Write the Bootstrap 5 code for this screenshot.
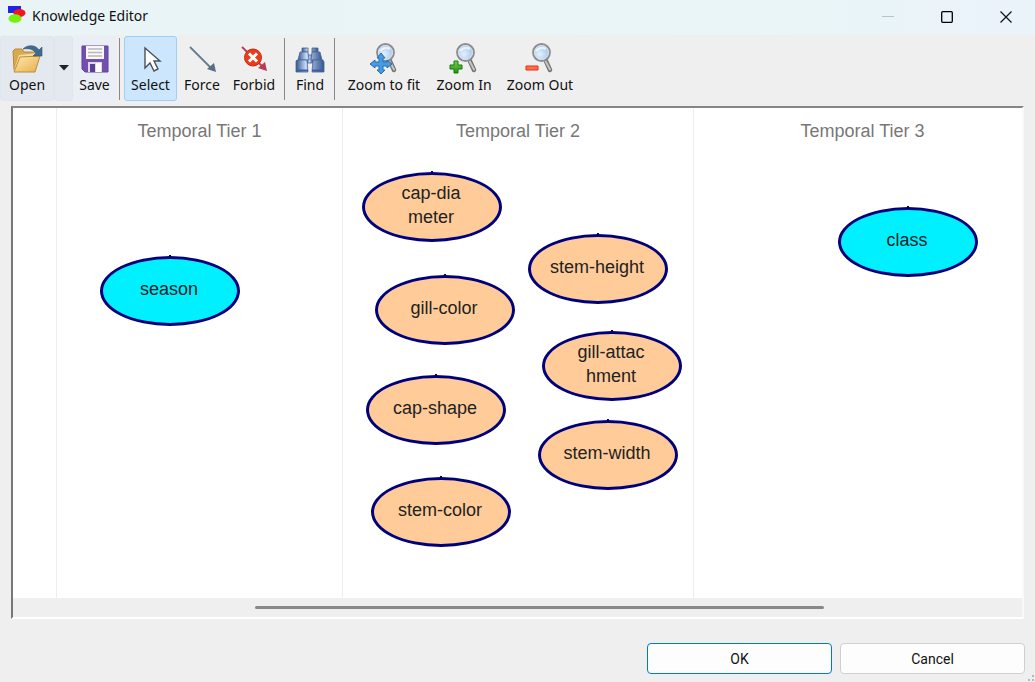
<!DOCTYPE html>
<html lang="en">
<head>
<meta charset="utf-8">
<meta name="viewport" content="width=device-width, initial-scale=1">
<title>Knowledge Editor</title>
<link href="https://cdn.jsdelivr.net/npm/bootstrap@5.3.0/dist/css/bootstrap.min.css" rel="stylesheet">
<style>
body{background:#efefef;color:#111;font:14px/20px "Noto Sans","Open Sans",sans-serif}
.titlebar{height:35px;background:linear-gradient(90deg,#e9f4f6,#e9f5f7 75%,#eaf3fa);padding-left:7px}
.window-title{font-size:14px;line-height:32px;padding-left:2px}
.caption-btn{width:59px;height:32px;border:0;background:none;padding:0}
.toolstrip{height:65px;margin-top:1px}
.tool{border:1px solid transparent;border-radius:3px;background:none;color:#111;padding:5px 0;line-height:20px;white-space:nowrap}
.tool svg{display:block;margin:0 auto 1px}
.tool-tinted{background:#e3e9ef;border-color:#dfe7ed}
.tool-soft{background:#e9eff5}
.tool-active{background:#cce6fd;border-color:#9bd0f8}
.w-open{width:54px}.w-drop{width:19px}.w-save{width:43px}.w-select{width:53px}.w-force{width:50px}.w-forbid{width:54px}.w-find{width:42px}.w-fit{width:90px}.w-in{width:70px}.w-out{width:82px}
.divider{width:1px;background:#888;margin:2px 4px 1px 3px}
.viewport-frame{margin:5px 11px 0;border:2px solid #858585;border-right-color:#f9f9f9;border-bottom-color:#fff;border-left-color:#777}
.board{height:490px;background:#fff;font:18px/24px "Liberation Sans",Arial,sans-serif}
.tier{border-left:1px solid #eee;padding-top:11px;text-align:center;color:#777;flex:none}
.tier h2{font:inherit;margin:0}
.tier-gutter{width:43px}.tier-a{width:286px}.tier-b{width:351px}.tier-c{min-width:338px;flex:1 0 338px}
.node{width:140px;height:70px;border:3px solid #00007d;border-radius:50%;background:#ffcc99;color:#222;text-align:center;padding:0 2px 4px 0}
.node::before{content:"";position:absolute;top:-4px;left:66px;width:2px;height:2px;background:#00007d}
.node-cyan{background:#00f0ff}
.scroll-track{height:19px;padding-top:8px}
.scroll-thumb{width:569px;height:3px;border-radius:2px;background:#898989}
.footer-actions{padding:24px 10px 8px;font-family:Roboto,sans-serif}
.dialog-btn{width:185px;height:31px;border:1px solid #d0d0d0;border-radius:4px;background:#fdfdfd;color:#111;padding:0}
.dialog-btn.default-btn{border-color:#0078d4}
.grip{right:0;bottom:0}
</style>
</head>
<body>
<header class="titlebar d-flex align-items-start">
  <svg class="mt-1" width="19" height="20" viewBox="0 0 19 20"><path fill="#2222e8" d="M1 2h13v7H1z"/><ellipse cx="12.500" cy="9" rx="6" ry="4" fill="#f3161b"/><ellipse cx="8" cy="14.500" rx="6.500" ry="4.300" fill="#75f20c"/></svg>
  <h1 class="window-title m-0 ms-1 fw-normal flex-grow-1">Knowledge Editor</h1>
  <button class="caption-btn" aria-label="Minimize"><svg width="12" height="12"><path d="M0 5.500h12" stroke="#bbc3c6"/></svg></button>
  <button class="caption-btn" aria-label="Maximize"><svg width="12" height="12"><rect x=".7" y=".7" width="10.600" height="10.600" rx="1" fill="none" stroke="#000" stroke-width="1.300"/></svg></button>
  <button class="caption-btn" aria-label="Close"><svg width="12" height="12"><path d="M.5.5l11 11m0-11l-11 11" stroke="#111" stroke-width="1.200"/></svg></button>
</header>

<svg width="0" height="0" class="position-absolute" aria-hidden="true">
  <defs>
    <linearGradient id="folder" x2="1" y2="1"><stop stop-color="#ffe9ae"/><stop offset="1" stop-color="#e8ae4c"/></linearGradient>
    <linearGradient id="tube"><stop stop-color="#34558f"/><stop offset=".35" stop-color="#c9daf5"/><stop offset="1" stop-color="#34558f"/></linearGradient>
    <linearGradient id="plus" x2="0" y2="1"><stop stop-color="#7ed04a"/><stop offset="1" stop-color="#1f9210"/></linearGradient>
    <radialGradient id="lens" cx=".4" cy=".6"><stop stop-color="#e4f1ff"/><stop offset="1" stop-color="#a9cbf0"/></radialGradient>
    <g id="glass"><path d="M21 17l5 11" stroke="#747474" stroke-width="4.500" stroke-linecap="round"/><path d="M21.500 19l4.500 8.500" stroke="#c4c4c4" stroke-width="2" stroke-linecap="round"/><circle cx="17.500" cy="10.500" r="8.400" fill="url(#lens)" stroke="#8c8c8c" stroke-width="2"/><circle cx="17.500" cy="10.500" r="7" fill="none" stroke="#dfe6ec"/><path d="M12 9q4-5 10-2" stroke="#fff" stroke-width="2" fill="none" opacity=".7"/></g>
  </defs>
</svg>

<nav class="toolstrip d-flex" aria-label="Tools">
  <button class="tool tool-tinted w-open"><svg width="32" height="32" viewBox="0 0 32 32"><path d="M2 9l2-2h7l2 3h11v18H3z" fill="#d9a950" stroke="#b98939"/><path d="M8 13L27 11l-3 17H3z" fill="#f6dc9b"/><path d="M9 15l20-1-5 16H3z" fill="url(#folder)" stroke="#bd8d3d"/><path d="M12 7C17 2 25 3 28 8l3-3v9h-9l3-3C22 7 18 6 12 7z" fill="#426a91" stroke="#325676" stroke-width=".6"/></svg>Open</button>
  <button class="tool tool-tinted w-drop" aria-label="Open options"><svg width="10" height="6"><path d="M0 0h10L5 5.500z" fill="#222"/></svg></button>
  <button class="tool tool-soft w-save"><svg width="28" height="32" viewBox="0 0 28 32"><path d="M1 4h26v26H4l-3-3z" fill="#7450ae" stroke="#60419b"/><path d="M5 4h18v13H5z" fill="#f8f8f8"/><path d="M7 7h14M7 10.500h14M7 14h14" stroke="#b8b8bc" stroke-width="1.300"/><path d="M7 20h14v10H7z" fill="#ddd9e4"/><path d="M9 22h5v8H9z" fill="#5b3e95"/><path d="M15 21h5v9h-5z" fill="#fff"/></svg>Save</button>
  <span class="divider"></span>
  <button class="tool tool-active w-select"><svg width="32" height="32" viewBox="0 0 32 32"><path d="M10 6v20l5-5 4 8 4-2-4-8h6z" fill="#fff" stroke="#4b5058" stroke-width="1.400"/></svg>Select</button>
  <button class="tool w-force"><svg width="32" height="32" viewBox="0 0 32 32"><path d="M4 5l22 22" stroke="#657b8e" stroke-width="1.800"/><path d="M30 30l-9-3 7-6z" fill="#566f84"/></svg>Force</button>
  <button class="tool w-forbid"><svg width="32" height="32" viewBox="0 0 32 32"><path d="M4 5l21 20" stroke="#bb4057" stroke-width="2"/><path d="M29 29l-9-3 7-6z" fill="#b53d52"/><circle cx="15" cy="15.500" r="8.500" fill="#ed3b19" stroke="#c4291a"/><path d="M11 11.500l8 8m0-8l-8 8" stroke="#fff" stroke-width="3"/></svg>Forbid</button>
  <span class="divider"></span>
  <button class="tool w-find"><svg width="32" height="32" viewBox="0 0 32 32"><g stroke="#456497" stroke-width=".8" fill="url(#tube)"><path d="M13 13h6v8h-6z"/><path d="M8 6h6v4H8zM18 6h6v4h-6z"/><path d="M6 10h8l1 8H4zM18 10h8l2 8H17z"/><path d="M3 18h10l1 12H2V19zM19 18h10l1 2v10H18z"/></g><path d="M2 28.500h12M18 28.500h12" stroke="#405f96" stroke-width="2"/></svg>Find</button>
  <span class="divider"></span>
  <button class="tool w-fit"><svg width="32" height="32" viewBox="0 0 32 32"><use href="#glass"/><path d="M13 11l4 5h-2v4h4v-2l5 4-5 4v-2h-4v4h2l-4 4-4-4h2v-4H7v2l-5-4 5-4v2h4v-4H9z" fill="#489be3" stroke="#246da9"/></svg>Zoom to fit</button>
  <button class="tool w-in"><svg width="32" height="32" viewBox="0 0 32 32"><use href="#glass"/><path d="M6 19h4v4h4v4h-4v4H6v-4H2v-4h4z" fill="url(#plus)" stroke="#177910"/></svg>Zoom In</button>
  <button class="tool w-out"><svg width="32" height="32" viewBox="0 0 32 32"><use href="#glass"/><path d="M2 24h12v4H2z" fill="#ff7048" stroke="#e52d18"/></svg>Zoom Out</button>
</nav>

<main>
  <div class="viewport-frame">
    <section class="board d-flex position-relative overflow-hidden" aria-label="Variables by tier">
      <div class="tier-gutter flex-shrink-0"></div>
      <div class="tier tier-a"><h2>Temporal Tier 1</h2></div>
      <div class="tier tier-b"><h2>Temporal Tier 2</h2></div>
      <div class="tier tier-c"><h2>Temporal Tier 3</h2></div>
      <div class="node node-cyan position-absolute d-flex align-items-center justify-content-center" style="left:87px;top:148px">season</div>
      <div class="node position-absolute d-flex align-items-center justify-content-center" style="left:349px;top:64px">cap-dia<br>meter</div>
      <div class="node position-absolute d-flex align-items-center justify-content-center" style="left:362px;top:167px">gill-color</div>
      <div class="node position-absolute d-flex align-items-center justify-content-center" style="left:353px;top:267px">cap-shape</div>
      <div class="node position-absolute d-flex align-items-center justify-content-center" style="left:358px;top:369px">stem-color</div>
      <div class="node position-absolute d-flex align-items-center justify-content-center" style="left:515px;top:126px">stem-height</div>
      <div class="node position-absolute d-flex align-items-center justify-content-center" style="left:529px;top:223px">gill-attac<br>hment</div>
      <div class="node position-absolute d-flex align-items-center justify-content-center" style="left:525px;top:312px">stem-width</div>
      <div class="node node-cyan position-absolute d-flex align-items-center justify-content-center" style="left:825px;top:99px">class</div>
    </section>
    <div class="scroll-track"><div class="scroll-thumb" style="margin-left:24%"></div></div>
  </div>
  <div class="footer-actions d-flex justify-content-end gap-2">
    <button class="dialog-btn default-btn">OK</button>
    <button class="dialog-btn">Cancel</button>
  </div>
</main>
<svg class="grip position-fixed" width="8" height="8" aria-hidden="true"><path d="M5 1h2v2H5zM1 5h2v2H1zM5 5h2v2H5z" fill="#b8b8b8"/></svg>
<script src="https://cdn.jsdelivr.net/npm/bootstrap@5.3.0/dist/js/bootstrap.bundle.min.js"></script>
</body>
</html>
